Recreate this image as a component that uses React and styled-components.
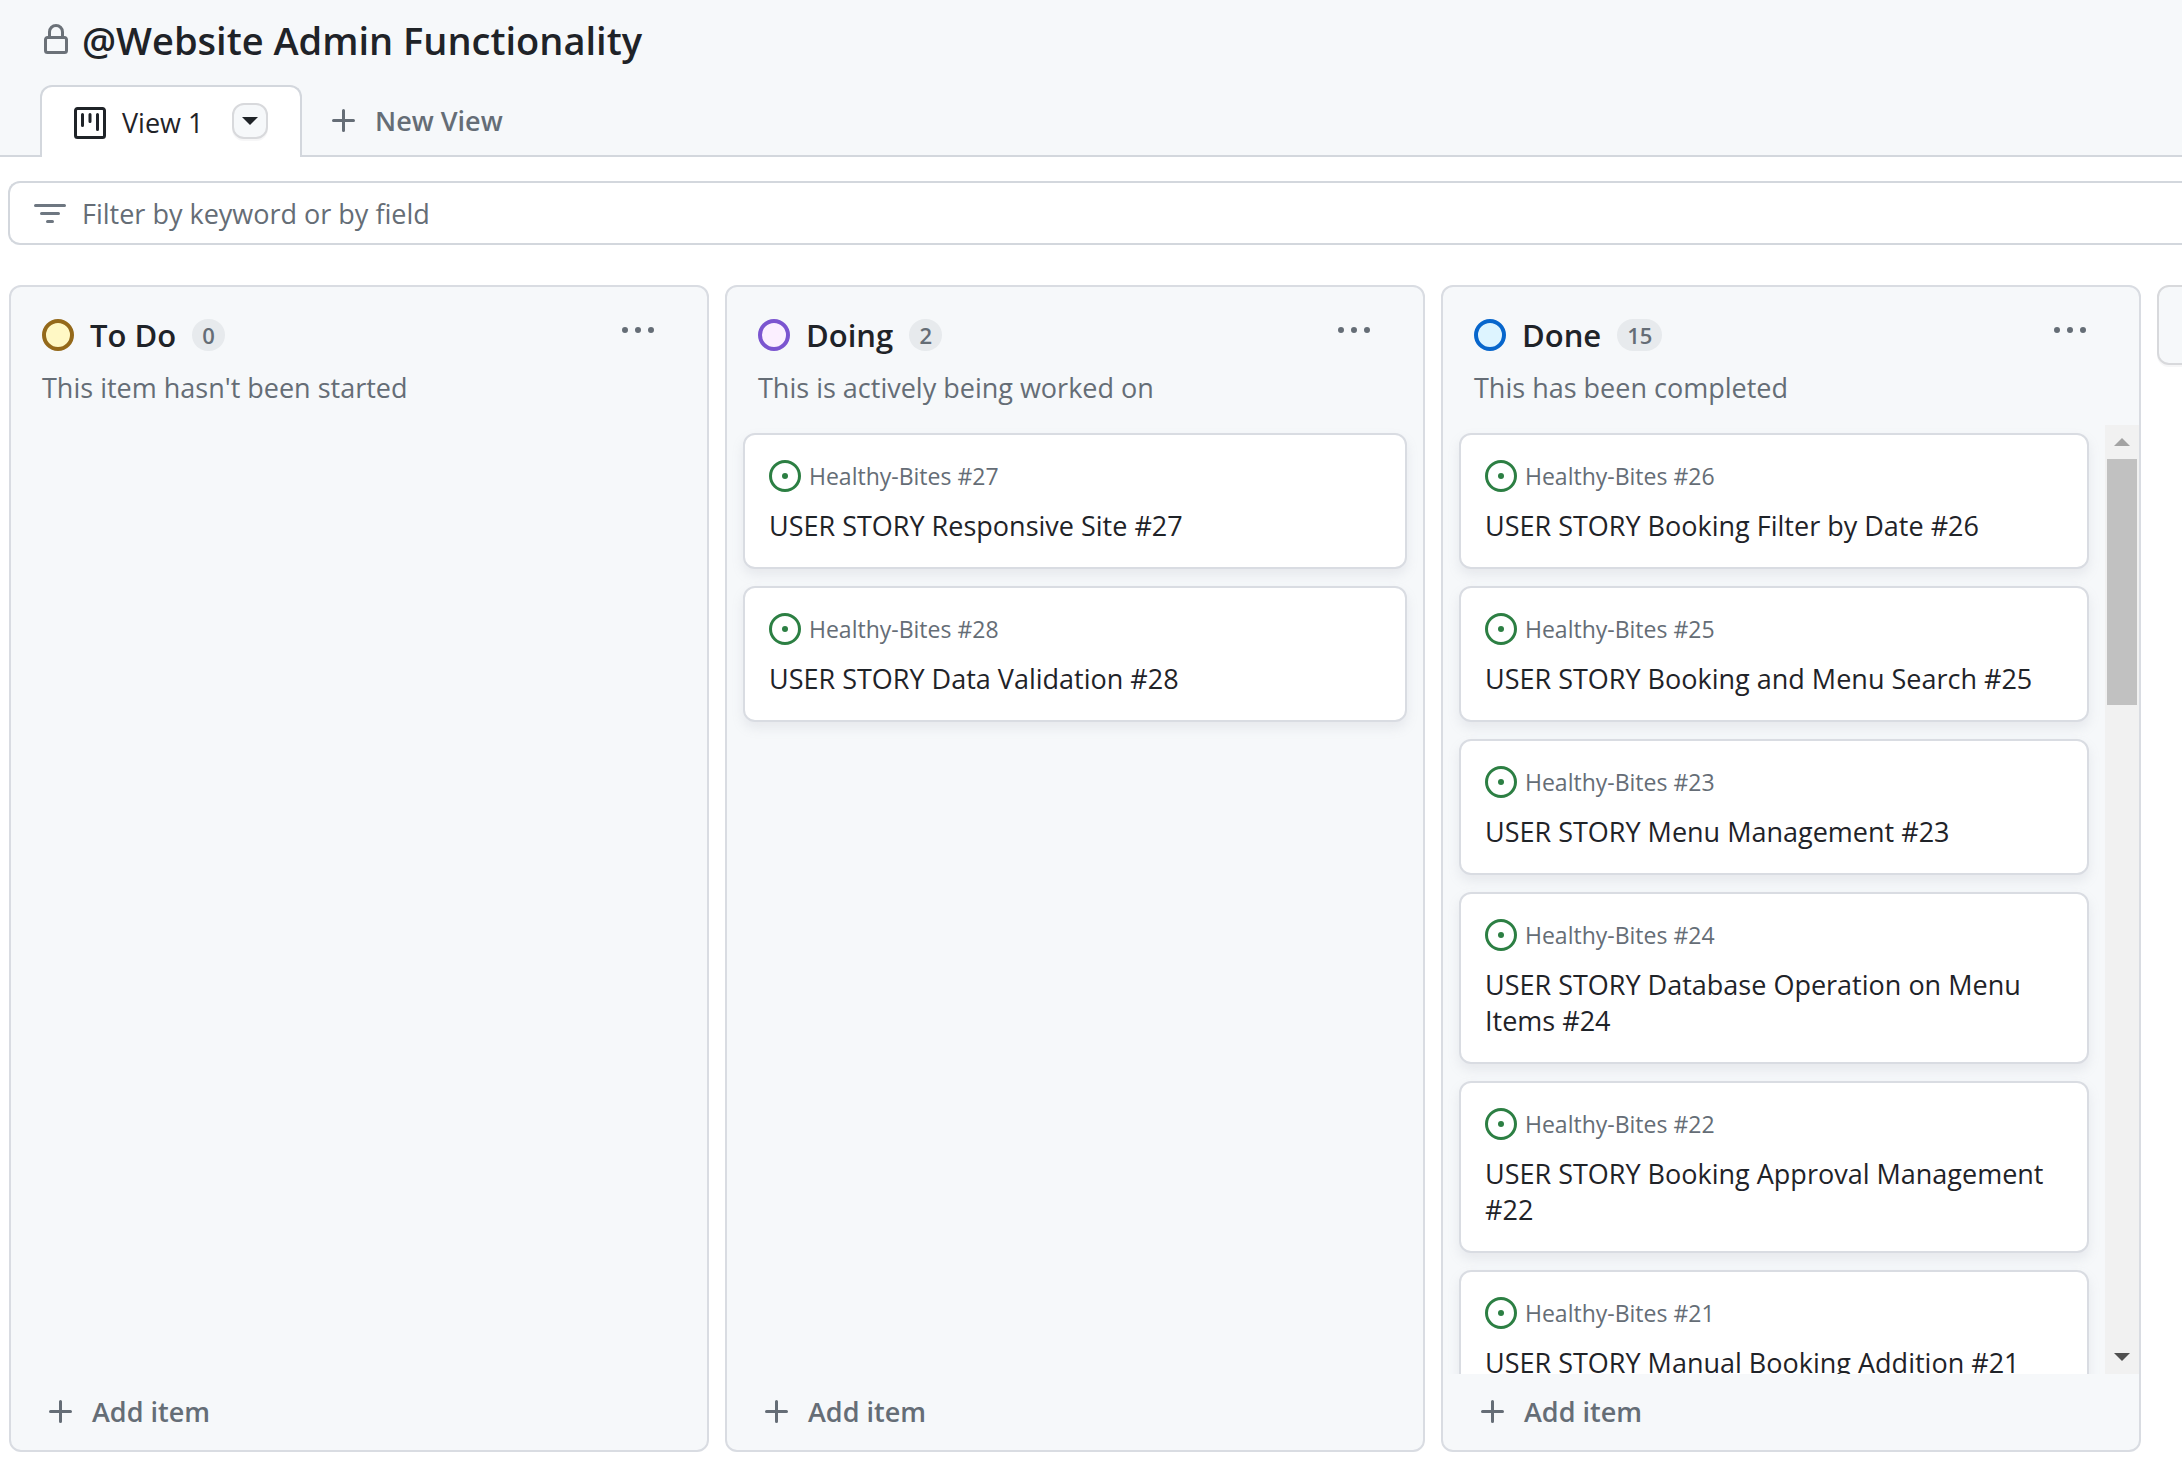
import React from "react";
import styled, { createGlobalStyle } from "styled-components";

const GlobalStyle = createGlobalStyle`
  *, *::before, *::after { box-sizing: border-box; }
  body {
    margin: 0;
    background: #ffffff;
    color: #1f2328;
    font-family: "Open Sans", "Noto Sans", "Liberation Sans", sans-serif;
    font-size: 27px;
    line-height: 36px;
  }
  button, input { font: inherit; color: inherit; }
  h1, h2, h3, p, ul { margin: 0; padding: 0; }
  ul { list-style: none; }
`;

const Page = styled.div`
  display: flex;
  flex-direction: column;
  height: 100vh;
  overflow: hidden;
`;

const Header = styled.header`
  display: flex;
  flex-direction: column;
  background: #f6f8fa;
`;

const TitleRow = styled.div`
  display: flex;
  align-items: center;
  gap: 10px;
  height: 85px;
  padding: 0 40px 6px;
  color: #6b7178;
`;

const ProjectTitle = styled.h1`
  font-size: 38px;
  font-weight: 600;
  line-height: 48px;
  color: #1f2328;
`;

const Tabs = styled.nav`
  display: flex;
  align-items: stretch;
  height: 72px;
  padding-left: 40px;
  box-shadow: inset 0 -2px 0 #d3d7dd;
`;

const Tab = styled.div`
  display: flex;
  align-items: center;
  width: 262px;
  padding: 2px 32px 0;
  border: 2px solid #d3d7dd;
  border-bottom: 0;
  border-radius: 12px 12px 0 0;
  background: #ffffff;
`;

const TabLink = styled.a`
  display: flex;
  flex: 1;
  align-items: center;
  gap: 16px;
  color: inherit;
  text-decoration: none;
`;

const MenuButton = styled.button`
  display: flex;
  align-items: center;
  justify-content: center;
  width: 36px;
  height: 36px;
  margin-bottom: 4px;
  padding: 0;
  border: 2px solid #d8d9dc;
  border-radius: 12px;
  background: #f6f8fa;
  box-shadow: 0 2px 0 rgba(31, 35, 40, 0.04);
`;

const GhostButton = styled.button`
  display: flex;
  align-items: center;
  gap: 15px;
  padding: 0 26px;
  border: 0;
  background: none;
  color: #656d76;
  font-weight: 600;
  text-align: left;
`;

const FilterBar = styled.label`
  display: flex;
  flex-shrink: 0;
  align-items: center;
  gap: 16px;
  height: 64px;
  margin: 24px 0 40px 8px;
  padding: 2px 24px 0;
  border: 2px solid #d3d7dd;
  border-right: 0;
  border-radius: 12px 0 0 12px;
  color: #6e7781;
`;

const FilterInput = styled.input`
  flex: 1;
  min-width: 0;
  padding: 0;
  border: 0;
  outline: 0;
  background: none;
  &::placeholder { color: #656d76; opacity: 1; }
`;

const Board = styled.main`
  display: flex;
  flex: 1;
  gap: 16px;
  min-height: 0;
  padding: 0 0 10px 9px;
`;

const Column = styled.section`
  display: flex;
  flex: 0 0 700px;
  flex-direction: column;
  border: 2px solid #d9dce2;
  border-radius: 12px;
  background: #f6f8fa;
`;

const ColumnHeader = styled.header`
  display: flex;
  flex-direction: column;
  gap: 15px;
  padding: 28px 31px 19px;
`;

const ColumnTop = styled.div`
  display: flex;
  align-items: center;
  gap: 16px;
  height: 40px;
`;

const StatusDot = styled.span`
  width: 32px;
  height: 32px;
  border: 4px solid ${(p) => p.$ring};
  border-radius: 50%;
  background: ${(p) => p.$fill};
`;

const ColumnTitle = styled.h2`
  font-size: 31px;
  font-weight: 600;
  line-height: 40px;
`;

const Count = styled.span`
  min-width: 33px;
  padding: 0 10px;
  border-radius: 16px;
  background: #e7eaed;
  color: #656d76;
  font-size: 22px;
  font-weight: 600;
  line-height: 32px;
  text-align: center;
`;

const IconButton = styled.button`
  display: flex;
  margin: 0 22px 8px auto;
  padding: 0;
  border: 0;
  background: none;
  color: #656d76;
`;

const Description = styled.p`
  color: #656d76;
`;

const ColumnBody = styled.div`
  display: flex;
  flex: 1;
  min-height: 0;
`;

const CardList = styled.ul`
  display: flex;
  flex: 1;
  flex-direction: column;
  gap: 17px;
  padding: 8px 16px;
  overflow-y: auto;
  scrollbar-width: none;
`;

const Card = styled.li`
  display: flex;
  flex-direction: column;
  flex-shrink: 0;
  gap: 16px;
  padding: 25px 24px 23px;
  border: 2px solid #d9dce2;
  border-radius: 12px;
  background: #ffffff;
  box-shadow: 0 6px 12px rgba(140, 149, 159, 0.15);
`;

const CardMeta = styled.div`
  display: flex;
  align-items: center;
  gap: 8px;
  height: 32px;
  color: #656d76;
  font-size: 23px;
  line-height: 32px;
`;

const CardTitle = styled.h3`
  font-size: 27px;
  font-weight: 400;
  line-height: 36px;
`;

const Scrollbar = styled.div`
  display: flex;
  flex-direction: column;
  align-items: center;
  justify-content: space-between;
  width: 34px;
  background: #f1f1f1;
`;

const Thumb = styled.div`
  width: 30px;
  height: 246px;
  margin-bottom: auto;
  background: #c1c1c1;
`;

const ArrowBox = styled.div`
  display: flex;
  align-items: center;
  justify-content: center;
  height: 34px;
  color: ${(p) => p.$color};
`;

const ColumnFooter = styled.footer`
  display: flex;
  height: 76px;
  padding: 0 8px;
`;

const NewColumn = styled.button`
  flex: 0 0 80px;
  height: 80px;
  border: 2px solid #d8d9dc;
  border-radius: 12px;
  background: #f6f8fa;
  box-shadow: 0 2px 0 rgba(31, 35, 40, 0.04);
`;

const LockIcon = () => (
  <svg width="32" height="32" viewBox="0 0 16 16" fill="currentColor" aria-hidden="true">
    <path d="M4 4a4 4 0 0 1 8 0v2h.25c.966 0 1.75.784 1.75 1.75v5.5A1.75 1.75 0 0 1 12.25 15h-8.5A1.75 1.75 0 0 1 2 13.25v-5.5C2 6.784 2.784 6 3.75 6H4Zm8.25 3.5h-8.5a.25.25 0 0 0-.25.25v5.5c0 .138.112.25.25.25h8.5a.25.25 0 0 0 .25-.25v-5.5a.25.25 0 0 0-.25-.25ZM10.5 6V4a2.5 2.5 0 1 0-5 0v2Z" />
  </svg>
);

const BoardIcon = () => (
  <svg width="32" height="32" viewBox="0 0 16 16" fill="currentColor" aria-hidden="true">
    <path d="M1.75 0h12.5C15.216 0 16 .784 16 1.75v12.5A1.75 1.75 0 0 1 14.25 16H1.75A1.75 1.75 0 0 1 0 14.25V1.75C0 .784.784 0 1.75 0ZM1.5 1.75v12.5c0 .138.112.25.25.25h12.5a.25.25 0 0 0 .25-.25V1.75a.25.25 0 0 0-.25-.25H1.75a.25.25 0 0 0-.25.25ZM11.75 3a.75.75 0 0 1 .75.75v7.5a.75.75 0 0 1-1.5 0v-7.5a.75.75 0 0 1 .75-.75Zm-8.25.75a.75.75 0 0 1 1.5 0v5.5a.75.75 0 0 1-1.5 0ZM8 3a.75.75 0 0 1 .75.75v3.5a.75.75 0 0 1-1.5 0v-3.5A.75.75 0 0 1 8 3Z" />
  </svg>
);

const PlusIcon = () => (
  <svg width="32" height="32" viewBox="0 0 16 16" fill="currentColor" aria-hidden="true">
    <path d="M7.75 2a.75.75 0 0 1 .75.75V7h4.25a.75.75 0 0 1 0 1.5H8.5v4.25a.75.75 0 0 1-1.5 0V8.5H2.75a.75.75 0 0 1 0-1.5H7V2.75A.75.75 0 0 1 7.75 2Z" />
  </svg>
);

const FilterIcon = () => (
  <svg width="32" height="32" viewBox="0 0 16 16" fill="currentColor" aria-hidden="true">
    <path d="M.75 3h14.5a.75.75 0 0 1 0 1.5H.75a.75.75 0 0 1 0-1.5ZM3 7.75A.75.75 0 0 1 3.75 7h8.5a.75.75 0 0 1 0 1.5h-8.5A.75.75 0 0 1 3 7.75Zm3 4a.75.75 0 0 1 .75-.75h2.5a.75.75 0 0 1 0 1.5h-2.5a.75.75 0 0 1-.75-.75Z" />
  </svg>
);

const KebabIcon = () => (
  <svg width="32" height="32" viewBox="0 0 16 16" fill="currentColor" aria-hidden="true">
    <path d="M8 9a1.5 1.5 0 1 0 0-3 1.5 1.5 0 0 0 0 3ZM1.5 9a1.5 1.5 0 1 0 0-3 1.5 1.5 0 0 0 0 3Zm13 0a1.5 1.5 0 1 0 0-3 1.5 1.5 0 0 0 0 3Z" />
  </svg>
);

const OpenIssueIcon = () => (
  <svg width="32" height="32" viewBox="0 0 16 16" fill="#2c7f43" aria-hidden="true">
    <path d="M8 9.5a1.5 1.5 0 1 0 0-3 1.5 1.5 0 0 0 0 3Z" />
    <path d="M8 0a8 8 0 1 1 0 16A8 8 0 0 1 8 0ZM1.5 8a6.5 6.5 0 1 0 13 0 6.5 6.5 0 0 0-13 0Z" />
  </svg>
);

const Triangle = ({ up }) => (
  <svg width="16" height="8" viewBox="0 0 16 8" fill="currentColor" aria-hidden="true">
    <path d={up ? "M0 8 8 0l8 8Z" : "M0 0h16L8 8Z"} />
  </svg>
);

const columns = [
  {
    title: "To Do",
    description: "This item hasn't been started",
    count: 0,
    ring: "#94691a",
    fill: "#fff8c5",
    cards: [],
  },
  {
    title: "Doing",
    description: "This is actively being worked on",
    count: 2,
    ring: "#7b55d0",
    fill: "#fbefff",
    cards: [
      { id: 27, text: "Responsive Site" },
      { id: 28, text: "Data Validation" },
    ],
  },
  {
    title: "Done",
    description: "This has been completed",
    count: 15,
    ring: "#0766cc",
    fill: "#ddf4ff",
    scrolls: true,
    cards: [
      { id: 26, text: "Booking Filter by Date" },
      { id: 25, text: "Booking and Menu Search" },
      { id: 23, text: "Menu Management" },
      { id: 24, text: "Database Operation on Menu Items" },
      { id: 22, text: "Booking Approval Management" },
      { id: 21, text: "Manual Booking Addition" },
    ],
  },
];

function BoardColumn({ column }) {
  return (
    <Column>
      <ColumnHeader>
        <ColumnTop>
          <StatusDot $ring={column.ring} $fill={column.fill} />
          <ColumnTitle>{column.title}</ColumnTitle>
          <Count>{column.count}</Count>
          <IconButton aria-label={`More actions for ${column.title}`}>
            <KebabIcon />
          </IconButton>
        </ColumnTop>
        <Description>{column.description}</Description>
      </ColumnHeader>
      <ColumnBody>
        <CardList>
          {column.cards.map((card) => (
            <Card key={card.id}>
              <CardMeta>
                <OpenIssueIcon />
                {`Healthy-Bites #${card.id}`}
              </CardMeta>
              <CardTitle>{`USER STORY ${card.text} #${card.id}`}</CardTitle>
            </Card>
          ))}
        </CardList>
        {column.scrolls && (
          <Scrollbar aria-hidden="true">
            <ArrowBox $color="#a3a3a3"><Triangle up /></ArrowBox>
            <Thumb />
            <ArrowBox $color="#505050"><Triangle /></ArrowBox>
          </Scrollbar>
        )}
      </ColumnBody>
      <ColumnFooter>
        <GhostButton>
          <PlusIcon />
          Add item
        </GhostButton>
      </ColumnFooter>
    </Column>
  );
}

export default function App() {
  return (
    <Page>
      <GlobalStyle />
      <Header>
        <TitleRow>
          <LockIcon />
          <ProjectTitle>@Website Admin Functionality</ProjectTitle>
        </TitleRow>
        <Tabs aria-label="Views">
          <Tab>
            <TabLink href="#view-1">
              <BoardIcon />
              View 1
            </TabLink>
            <MenuButton aria-label="View options">
              <Triangle />
            </MenuButton>
          </Tab>
          <GhostButton>
            <PlusIcon />
            New View
          </GhostButton>
        </Tabs>
      </Header>
      <FilterBar>
        <FilterIcon />
        <FilterInput aria-label="Filter" placeholder="Filter by keyword or by field" />
      </FilterBar>
      <Board>
        {columns.map((column) => (
          <BoardColumn key={column.title} column={column} />
        ))}
        <NewColumn aria-label="Add a new column" />
      </Board>
    </Page>
  );
}
